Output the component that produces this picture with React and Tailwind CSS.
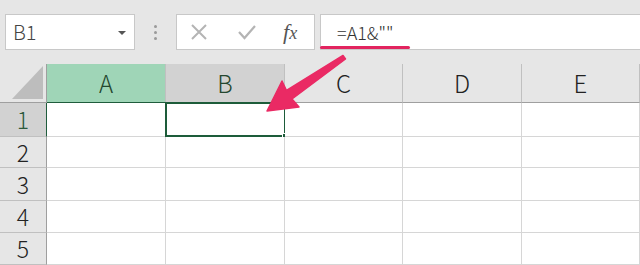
import { useState } from 'react';

const cols = ['A', 'B', 'C', 'D', 'E'];
const rows = [
  { n: 1, h: 'h-[34px]' },
  { n: 2, h: 'h-[31px]' },
  { n: 3, h: 'h-[33px]' },
  { n: 4, h: 'h-[32px]' },
  { n: 5, h: 'h-[32px]' },
];

const font = { fontFamily: '"Noto Sans CJK JP", "Noto Sans", sans-serif' };

const Toolbar = () => (
  <div className="flex h-[64px] items-start bg-[#e6e6e6] pt-[14px]">
    {/* name box */}
    <div className="ml-[5px] flex h-[36px] w-[130px] items-center justify-between border border-[#c8c8c8] bg-white pl-[7px] pr-[8px]">
      <span className="text-[20px] font-light text-[#444]">B1</span>
      <span className="mt-[1px] h-0 w-0 border-x-[4px] border-t-[4px] border-x-transparent border-t-[#555]" />
    </div>

    {/* grip dots */}
    <div className="flex w-[41px] flex-col items-center gap-[3px] pt-[11px]">
      <span className="h-[3px] w-[3px] rounded-full bg-[#9a9a9a]" />
      <span className="h-[3px] w-[3px] rounded-full bg-[#9a9a9a]" />
      <span className="h-[3px] w-[3px] rounded-full bg-[#9a9a9a]" />
    </div>

    {/* cancel / enter / fx */}
    <div className="flex h-[36px] w-[139px] items-center border border-[#c8c8c8] bg-white pl-[13px]">
      <svg width="18" height="18" viewBox="0 0 18 18" className="mr-[29px]">
        <path d="M2 2 L16 16 M16 2 L2 16" stroke="#b4b4b4" strokeWidth="2" />
      </svg>
      <svg width="20" height="18" viewBox="0 0 20 18" className="mr-[26px]">
        <path d="M2 9 L7.5 15 L18 3" stroke="#b4b4b4" strokeWidth="2.2" fill="none" />
      </svg>
      <span className="text-[22px] italic leading-none text-[#555]" style={{ fontFamily: '"Liberation Serif", serif' }}>
        f<span className="text-[18px]">x</span>
      </span>
    </div>

    {/* formula bar */}
    <div className="ml-[5px] flex h-[36px] flex-1 items-center border border-r-0 border-[#c8c8c8] bg-white pl-[16px]">
      <span className="text-[18px] font-light text-[#333]">=A1&amp;""</span>
    </div>
  </div>
);

const Sheet = () => (
  <div className="grid grid-cols-[47px_119px_119px_118px_119px_118px]">
    {/* corner */}
    <div className="relative h-[39px] border-b border-r border-[#9f9f9f] bg-[#e6e6e6]">
      <svg width="47" height="39" viewBox="0 0 47 39" className="absolute left-0 top-0">
        <polygon points="12,35 43,2 43,35" fill="#bdbdbd" />
      </svg>
    </div>
    {cols.map((c) => {
      const bg = c === 'A' ? 'bg-[#9fd5b7] border-b-[#1f5c3c]' : c === 'B' ? 'bg-[#d2d2d2] border-b-[#9f9f9f]' : 'bg-[#e6e6e6] border-b-[#9f9f9f]';
      const tc = c === 'A' || c === 'B' ? 'text-[#24472f]' : 'text-[#222]';
      return (
        <div key={c} className={`flex h-[39px] items-center justify-center border-b border-r border-r-[#c0c0c0] ${bg}`}>
          <span className={`text-[24px] font-light leading-none ${tc}`}>{c}</span>
        </div>
      );
    })}

    {rows.map((r) => (
      <div key={r.n} className="contents">
        <div className={`flex ${r.h} items-center justify-center border-b border-r ${r.n === 1 ? 'border-r-[#1f5c3c] bg-[#d2d2d2] text-[#2d5a3c]' : 'border-r-[#9f9f9f] bg-[#e6e6e6] text-[#222]'} border-b-[#c0c0c0]`}>
          <span className="text-[23px] font-light leading-none">{r.n}</span>
        </div>
        {cols.map((c) => (
          <div key={c} className={`relative ${r.h} border-b border-r border-[#d6d6d6] bg-white`}>
            {r.n === 1 && c === 'B' && (
              <div className="absolute -left-[1px] -top-[1px] h-[35px] w-[121px] border-2 border-[#1d5c3a]">
                <span className="absolute -bottom-[4px] -right-[4px] h-[6px] w-[6px] border border-white bg-[#1d5c3a]" />
              </div>
            )}
          </div>
        ))}
      </div>
    ))}
  </div>
);

const App = () => {
  const [sel] = useState('B1');

  return (
    <div className="relative h-[265px] w-[640px] overflow-hidden bg-white" style={font} data-sel={sel}>
      <Toolbar />
      <Sheet />

      {/* annotation: underline + arrow */}
      <div className="absolute left-[320px] top-[46px] h-[3px] w-[90px] rounded-full bg-[#e2245f]" />
      <svg width="640" height="265" viewBox="0 0 640 265" className="pointer-events-none absolute left-0 top-0">
        <polygon
          points="267,111 282,81 286.5,90.5 343,55.5 345.5,59 292,99 299,107"
          fill="#ea2a64"
          stroke="#ea2a64"
          strokeWidth="1.5"
          strokeLinejoin="round"
        />
      </svg>
    </div>
  );
};

export default App;
